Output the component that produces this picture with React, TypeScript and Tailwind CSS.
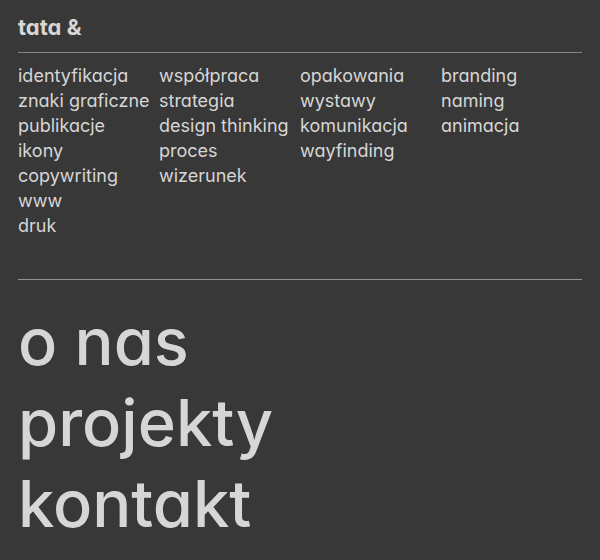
const services = [
	['identyfikacja', 'znaki graficzne', 'publikacje', 'ikony', 'copywriting', 'www', 'druk'],
	['współpraca', 'strategia', 'design thinking', 'proces', 'wizerunek'],
	['opakowania', 'wystawy', 'komunikacja', 'wayfinding'],
	['branding', 'naming', 'animacja'],
];

const links = ['o nas', 'projekty', 'kontakt'];

function ServiceColumn(props: { items: string[] }) {
	return (
		<ul className="min-w-0 whitespace-nowrap text-[18px] leading-[25px]">
			{props.items.map((item) => (
				<li key={item}>{item}</li>
			))}
		</ul>
	);
}

export default function App() {
	return (
		<div className="min-h-screen bg-[#383838] px-[18px] pt-[13px] font-['Inter','Noto_Sans',sans-serif] text-[#d6d6d6] [font-feature-settings:'cv11']">
			<header className="border-b border-[#858585] pb-[11px]">
				<a href="#" className="block text-[22px] leading-7 font-bold">
					tata &amp;
				</a>
			</header>
			<section className="grid grid-cols-4 border-b border-[#929292] pt-[10px] pb-[41px]">
				{services.map((items) => (
					<ServiceColumn key={items[0]} items={items} />
				))}
			</section>
			<nav className="flex flex-col items-start pt-[21px] text-[65px] leading-[81px] font-medium">
				{links.map((link) => (
					<a key={link} href="#">
						{link}
					</a>
				))}
			</nav>
		</div>
	);
}
